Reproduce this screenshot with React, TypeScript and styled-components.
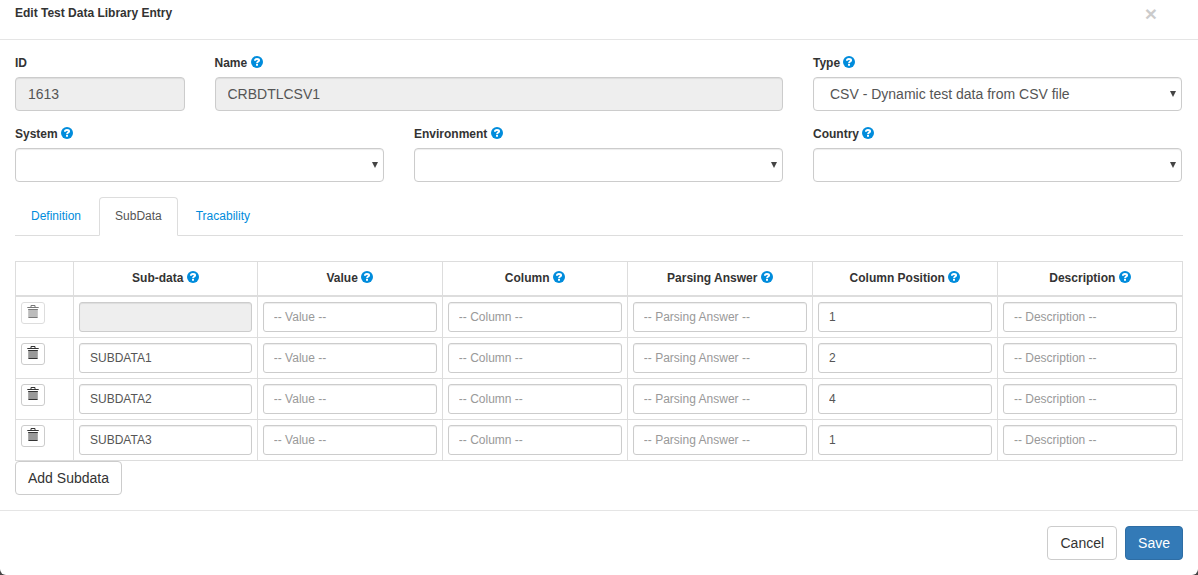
import React, { useState } from "react";
import styled, { createGlobalStyle, css } from "styled-components";

const GlobalStyle = createGlobalStyle`
  *, *::before, *::after { box-sizing: border-box; }
  html { background: #444; }
  body {
    margin: 0;
    font-family: "Liberation Sans", Arial, sans-serif;
    font-size: 12px;
    line-height: 17px;
    color: #333;
  }
  button, input, select { font-family: inherit; }
`;

const Modal = styled.form`
  background: #fff;
  border-radius: 0 0 6px 6px;
`;

const ModalHeader = styled.header`
  display: flex;
  justify-content: space-between;
  align-items: flex-start;
  padding: 5px 41px 17px 15px;
  border-bottom: 1px solid #e5e5e5;
`;

const Title = styled.h1`
  margin: 0;
  font-size: 12px;
  line-height: 17px;
`;

const CloseButton = styled.button`
  height: 17px;
  padding: 0;
  border: 0;
  background: transparent;
  color: #000;
  font-size: 21px;
  font-weight: bold;
  line-height: 17px;
  text-shadow: 0 1px 0 #fff;
  opacity: 0.2;
  cursor: pointer;
`;

const ModalBody = styled.div`
  padding: 15px;
`;

const FieldGrid = styled.div`
  display: grid;
  grid-template-columns: repeat(12, minmax(0, 1fr));
  gap: 15px 30px;
  margin: 0 1px 15px 0;
`;

const Field = styled.div<{ $span: number }>`
  grid-column: span ${(p) => p.$span};
`;

const Label = styled.label`
  display: block;
  margin-bottom: 5px;
  font-weight: bold;
`;

const controlStyle = css`
  display: block;
  width: 100%;
  border: 1px solid #ccc;
  background: #fff;
  color: #555;
  box-shadow: inset 0 1px 1px rgba(0, 0, 0, 0.075);
  outline: 0;
  &:focus { border-color: #66afe9; }
  &:read-only:not(select) { background: #eee; }
  &::placeholder { color: #999; opacity: 1; }
`;

const TextInput = styled.input`
  ${controlStyle}
  height: 34px;
  padding: 6px 12px;
  border-radius: 4px;
  font-size: 14px;
`;

const CellInput = styled.input`
  ${controlStyle}
  height: 30px;
  padding: 5px 10px;
  border-radius: 3px;
  font-size: 12px;
`;

const SelectWrap = styled.div`
  position: relative;
`;

const Select = styled.select`
  ${controlStyle}
  height: 34px;
  padding: 6px 20px 6px 16px;
  border-radius: 4px;
  font-size: 14px;
  appearance: none;
`;

const SelectArrow = styled.svg`
  position: absolute;
  right: 6px;
  top: 14px;
  fill: #444;
  pointer-events: none;
`;

const HelpSvg = styled.svg`
  display: inline-block;
  vertical-align: -1px;
`;

const Tabs = styled.ul`
  display: flex;
  gap: 2px;
  margin: 0 0 25px;
  padding: 0;
  list-style: none;
  border-bottom: 1px solid #ddd;
`;

const Tab = styled.a<{ $active: boolean }>`
  display: block;
  margin-bottom: -1px;
  padding: 10px 15px;
  border: 1px solid transparent;
  border-radius: 4px 4px 0 0;
  color: #008cdc;
  text-decoration: none;
  ${(p) =>
    p.$active &&
    css`
      color: #555;
      background: #fff;
      border-color: #ddd #ddd #fff;
    `}
`;

const Table = styled.table`
  width: 100%;
  table-layout: fixed;
  border-collapse: collapse;
`;

const HeadCell = styled.th`
  padding: 8px 5px;
  border: 1px solid #ddd;
  border-bottom-width: 2px;
  text-align: center;
`;

const NameHead = styled(HeadCell)`
  width: 15.75%;
`;

const ActionHead = styled.td`
  width: 58px;
  border: 1px solid #ddd;
  border-bottom-width: 2px;
`;

const Cell = styled.td`
  padding: 5px;
  border: 1px solid #ddd;
  vertical-align: top;
`;

const DeleteButton = styled.button`
  display: flex;
  padding: 2px 5px 4px;
  border: 1px solid #ccc;
  border-radius: 3px;
  background: #fff;
  color: #333;
  cursor: pointer;
  &:disabled { opacity: 0.65; cursor: not-allowed; }
`;

const Button = styled.button<{ $primary?: boolean }>`
  height: 34px;
  padding: 6px 12px;
  border: 1px solid ${(p) => (p.$primary ? "#2e6da4" : "#ccc")};
  border-radius: 4px;
  background: ${(p) => (p.$primary ? "#337ab7" : "#fff")};
  color: ${(p) => (p.$primary ? "#fff" : "#333")};
  font-size: 14px;
  line-height: 20px;
  cursor: pointer;
`;

const ModalFooter = styled.footer`
  display: flex;
  justify-content: flex-end;
  gap: 8px;
  padding: 15px;
  border-top: 1px solid #e5e5e5;
`;

const HelpIcon = () => (
  <HelpSvg width="12" height="12" viewBox="0 0 12 12" aria-hidden="true">
    <circle cx="6" cy="6" r="6" fill="#008cdc" />
    <path d="M3.9 4.8C3.9 3.5 4.8 3 6 3S8.1 3.6 8.1 4.4C8.1 5.6 6 5.5 6 7.2" fill="none" stroke="#fff" strokeWidth="1.9" />
    <path d="M5 8h2v1.8H5z" fill="#fff" />
  </HelpSvg>
);

const TrashIcon = () => (
  <svg width="12" height="14" viewBox="0 0 12 14" aria-hidden="true">
    <path d="M4 2V.5h4V2" fill="none" stroke="currentColor" />
    <path d="M.3 2h11.4v1H.3z" fill="currentColor" />
    <path d="M1.2 4h9.6v9H1.2z" fill="currentColor" fillOpacity=".5" />
    <path d="M1.2 4h9.6v1H1.2zM1.6 12h8.8v1H1.6z" fill="currentColor" />
  </svg>
);

type DropDownProps = { id: string; label: string; options?: string[] };

const DropDown = ({ id, label, options = [""] }: DropDownProps) => (
  <Field $span={4}>
    <Label htmlFor={id}>{label} <HelpIcon /></Label>
    <SelectWrap>
      <Select id={id}>
        {options.map((o) => <option key={o}>{o}</option>)}
      </Select>
      <SelectArrow width="6" height="6" viewBox="0 0 6 6" aria-hidden="true">
        <path d="M0 0h6L3 6z" />
      </SelectArrow>
    </SelectWrap>
  </Field>
);

const columns = ["Sub-data", "Value", "Column", "Parsing Answer", "Column Position", "Description"];

const initialRows = [
  { id: 0, name: "", position: "1" },
  { id: 1, name: "SUBDATA1", position: "2" },
  { id: 2, name: "SUBDATA2", position: "4" },
  { id: 3, name: "SUBDATA3", position: "1" },
];

const tabs = ["Definition", "SubData", "Tracability"];

export default function App() {
  const [rows, setRows] = useState(initialRows);
  const [active, setActive] = useState("SubData");

  const addRow = () =>
    setRows((r) => [...r, { id: Math.max(0, ...r.map((x) => x.id)) + 1, name: "", position: "" }]);

  const valueFor = (row: (typeof initialRows)[number], column: string) => {
    if (column === "Sub-data") return row.name;
    if (column === "Column Position") return row.position;
    return "";
  };

  return (
    <>
      <GlobalStyle />
      <Modal onSubmit={(e) => e.preventDefault()}>
        <ModalHeader>
          <Title>Edit Test Data Library Entry</Title>
          <CloseButton type="button" aria-label="Close">×</CloseButton>
        </ModalHeader>
        <ModalBody>
          <FieldGrid>
            <Field $span={2}>
              <Label htmlFor="entry-id">ID</Label>
              <TextInput id="entry-id" defaultValue="1613" readOnly />
            </Field>
            <Field $span={6}>
              <Label htmlFor="entry-name">Name <HelpIcon /></Label>
              <TextInput id="entry-name" defaultValue="CRBDTLCSV1" readOnly />
            </Field>
            <DropDown id="entry-type" label="Type" options={["CSV - Dynamic test data from CSV file"]} />
            <DropDown id="entry-system" label="System" />
            <DropDown id="entry-environment" label="Environment" />
            <DropDown id="entry-country" label="Country" />
          </FieldGrid>
          <Tabs>
            {tabs.map((t) => (
              <li key={t}>
                <Tab
                  href={`#${t.toLowerCase()}`}
                  $active={t === active}
                  aria-current={t === active ? "true" : undefined}
                  onClick={(e) => { e.preventDefault(); setActive(t); }}
                >
                  {t}
                </Tab>
              </li>
            ))}
          </Tabs>
          <Table>
            <thead>
              <tr>
                <ActionHead />
                <NameHead scope="col">{columns[0]} <HelpIcon /></NameHead>
                {columns.slice(1).map((c) => <HeadCell key={c} scope="col">{c} <HelpIcon /></HeadCell>)}
              </tr>
            </thead>
            <tbody>
              {rows.map((row, i) => (
                <tr key={row.id}>
                  <Cell>
                    <DeleteButton
                      type="button"
                      aria-label="Delete"
                      disabled={i === 0}
                      onClick={() => setRows((r) => r.filter((x) => x.id !== row.id))}
                    >
                      <TrashIcon />
                    </DeleteButton>
                  </Cell>
                  {columns.map((c, n) => (
                    <Cell key={c}>
                      <CellInput
                        aria-label={c}
                        defaultValue={valueFor(row, c)}
                        placeholder={i === 0 && n === 0 ? undefined : `-- ${c} --`}
                        readOnly={i === 0 && n === 0}
                      />
                    </Cell>
                  ))}
                </tr>
              ))}
            </tbody>
          </Table>
          <Button type="button" onClick={addRow}>Add Subdata</Button>
        </ModalBody>
        <ModalFooter>
          <Button type="button">Cancel</Button>
          <Button type="submit" $primary>Save</Button>
        </ModalFooter>
      </Modal>
    </>
  );
}
